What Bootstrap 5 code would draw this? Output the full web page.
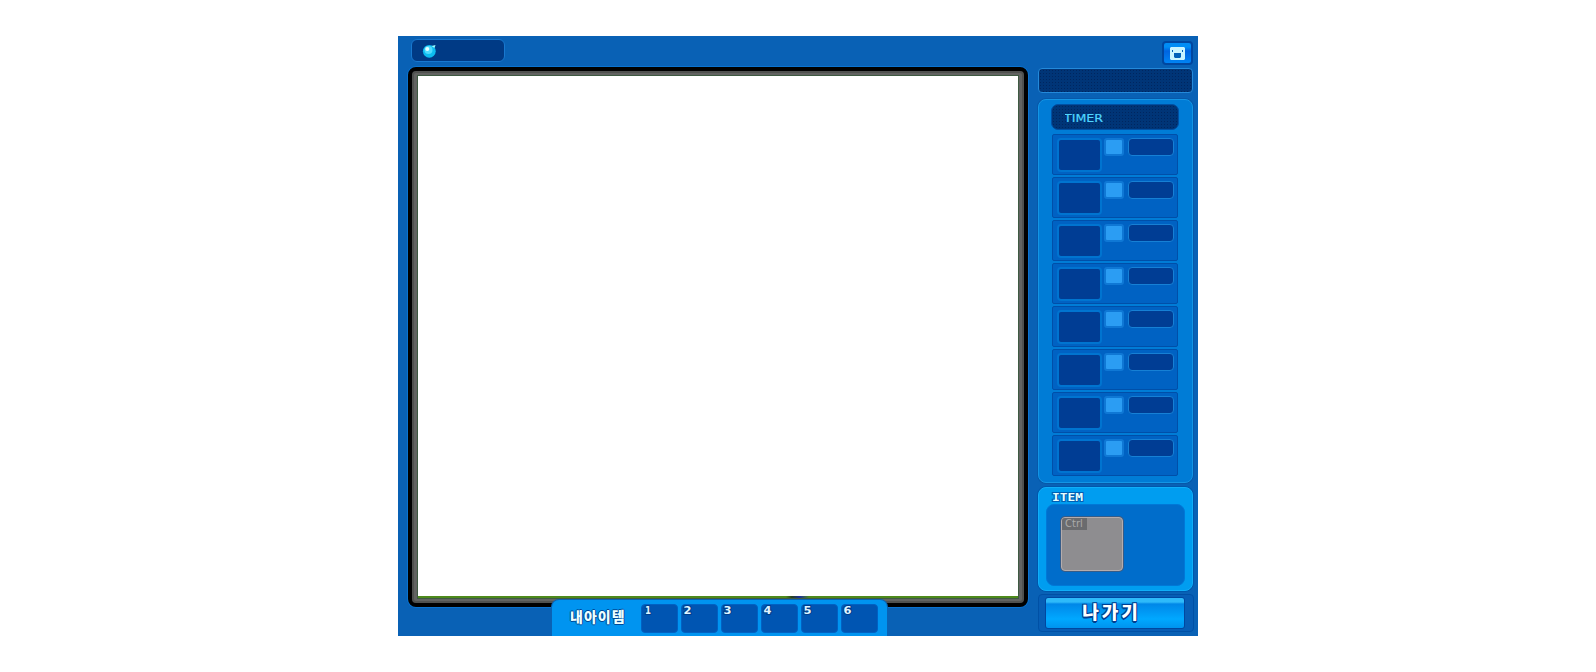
<!DOCTYPE html>
<html lang="ko">
<head>
<meta charset="utf-8">
<title>Game room</title>
<link href="https://cdn.jsdelivr.net/npm/bootstrap@5.3.0/dist/css/bootstrap.min.css" rel="stylesheet">
<style>
body{background:#fff;font-family:"Noto Sans","Noto Sans CJK KR",sans-serif;line-height:1}
.stage{width:800px;height:600px;margin-top:36px;background:#0961b5;padding-left:10px}
.left-side{width:620px;padding-top:3px}
.gem-box{width:94px;height:23px;margin-left:3px;border-radius:6px;background:#003a85;border:1px solid #1878cf;padding-left:10px}
.screen{width:620px;height:540px;margin-top:5px;background:#626361;border:4px solid #000;border-radius:8px;padding:5px 6px 0;box-shadow:0 0 0 1px #0a73d0,inset 0 0 0 2px #50514f}
.view{background:#fff;height:522px;box-shadow:0 0 0 1px #3e5a42;border-bottom:2px solid #4e8a1c}
.speck{left:368px;top:520px;width:23px;height:2px;background:linear-gradient(90deg,#4e8a1c,#28401c 25%,#1b2d9a 60%,#4e8a1c)}
.item-tab{left:154px;bottom:0;width:335px;height:36px;background:#0094f0;border-radius:7px 7px 0 0;padding:4px 0 0 18px;box-shadow:0 0 0 1px #0a62b4}
.tab-title{width:71px;font-weight:900;font-size:14px;color:#eaffff;letter-spacing:1px;text-shadow:1px 0 #004a98,-1px 0 #004a98,0 1px #004a98,0 -1px #004a98;line-height:26px;white-space:nowrap}
.slot{width:37px;height:29px;margin-right:3px;background:#0055b2;border-radius:4px;border:1px solid #0061c3}
.slot svg{display:block}
.right-side{width:156px;margin-left:10px;padding-top:5px}
.cam{width:31px;height:24px;margin-bottom:3px;margin-right:1px;background:linear-gradient(#008df5 0 4px,#0064e0 8px,#0084f4);border:2px solid #0047a0;border-radius:4px}
.dots{background-color:#003577;background-image:radial-gradient(#00265f 34%,transparent 38%);background-size:3px 3px}
.name-bar{height:25px;width:155px;border:1px solid #2389da;border-radius:4px}
.players{height:384px;width:155px;margin-top:6px;background:#007cd6;border:1px solid #1395e5;border-radius:8px;padding:4px 12px 0;box-shadow:0 0 0 1px #0758a9}
.timer{height:26px;width:128px;border-radius:7px;margin-bottom:4px;padding-left:13px;border:1px solid #0050a4}
.timer svg,.item-panel svg{display:block}
.seat{width:126px;height:41px;margin:0 0 2px 1px;background:#0062c3;border:1px solid #004fa9;border-radius:2px;padding:3px 3px 0 5px}
.face{width:45px;height:34px;margin-left:-1px;background:#003d94;border:2px solid #0074d0;border-radius:4px}
.rank{width:20px;height:18px;margin-left:2px;background:#2b9df3;border:2px solid #0f78d5;border-radius:3px}
.nick{width:46px;height:18px;margin-left:4px;background:#003d94;border:1px solid #1680d5;border-radius:4px}
.item-panel{width:155px;height:104px;margin-top:4px;background:#009df0;border-radius:8px;padding:3px 8px;border:1px solid #10aef8;box-shadow:0 0 0 1px #0057ac}
.item-well{width:139px;height:82px;margin-left:-1px;margin-top:0;background:#006dcb;border-radius:8px;padding:12px 13px 13px 14px;border:1px solid #0078d7}
.card-slot{width:62px;height:54px;background:#8e8d90;border:1px solid #b5acac;border-radius:4px;box-shadow:0 0 0 1px #365c88}
.key-tag{width:25px;height:12px;background:#6a6b6e;color:#aaa;font:10px/12px "DejaVu Sans",sans-serif;padding-left:3px;border-radius:3px 0 0}
.exit-wrap{width:156px;height:38px;margin-top:3px;border:1px solid #0050a5;border-radius:4px;padding:2px 6px;background:#075db5}
.exit-btn{width:140px;height:32px;background:linear-gradient(#2ebafa 0 4px,#0087e8 6px,#00a8ff 70%,#0093ee);border:1px solid #0047a0;border-radius:3px;color:#fff;font-weight:900;font-size:18px;line-height:29px;letter-spacing:3px;padding-right:7px;text-shadow:1px 1px #003f91,-1px 1px #003f91,1px -1px #003f91,-1px -1px #003f91,0 2px #003f91}
</style>
</head>
<body>
<main class="stage mx-auto d-flex position-relative overflow-hidden">
 <section class="left-side">
  <div class="gem-box d-flex align-items-center">
   <svg width="15" height="14" viewBox="0 0 14 14"><circle cx="6.8" cy="7.3" r="6.4" fill="#0cbdf0"/><circle cx="6" cy="6" r="4" fill="#4fdcff"/><circle cx="4.8" cy="5" r="2" fill="#e8ffff"/><path d="M9 2l4-1-1 3z" fill="#9ff"/></svg>
  </div>
  <div class="screen"><div class="view position-relative"><div class="speck position-absolute"></div></div></div>
 </section>
 <aside class="right-side d-flex flex-column">
  <div class="cam align-self-end d-flex justify-content-center align-items-center">
   <svg width="15" height="13" viewBox="0 0 15 13"><path d="M1 0h13l1 1v11l-1 1H1l-1-1V1z" fill="#c8f4ff"/><path d="M2 3h1v2H2zM12 3h1v2h-1zM4 6h7v4l-1 1H5l-1-1z" fill="#0060b8"/></svg>
  </div>
  <div class="name-bar dots"></div>
  <div class="players">
   <div class="timer dots"><svg width="60" height="24"><text x="-1" y="17" textLength="39" lengthAdjust="spacingAndGlyphs" font-family="DejaVu Sans" font-size="10.5" fill="#4fd6ff" stroke="#4fd6ff" stroke-width=".2">TIMER</text></svg></div>
   <div id="seats"></div>
  </div>
  <div class="item-panel">
   <svg width="60" height="13"><text x="5" y="10" textLength="31" lengthAdjust="spacingAndGlyphs" font-family="DejaVu Sans Mono" font-weight="700" font-size="11" fill="#e6ffff" stroke="#0060b4" stroke-width="2" paint-order="stroke">ITEM</text></svg>
   <div class="item-well"><div class="card-slot"><div class="key-tag">Ctrl</div></div></div>
  </div>
  <div class="exit-wrap"><div class="exit-btn text-center">나가기</div></div>
 </aside>
 <nav class="item-tab position-absolute d-flex">
  <div class="tab-title">내아이템</div>
  <div id="slots" class="d-flex"></div>
 </nav>
</main>
<script src="https://cdn.jsdelivr.net/npm/bootstrap@5.3.0/dist/js/bootstrap.bundle.min.js"></script>
<script>
document.getElementById('seats').innerHTML='<div class="seat d-flex"><div class="face"></div><div class="rank"></div><div class="nick"></div></div>'.repeat(8);
document.getElementById('slots').innerHTML=[1,2,3,4,5,6].map(n=>`<div class="slot"><svg width="20" height="14"><text x="${n===1?3:1.5}" y="8.5" textLength="${n===1?6:8}" lengthAdjust="spacingAndGlyphs" font-family="DejaVu Sans" font-weight="700" font-size="10" fill="#dff4ff" stroke="#003f8c" stroke-width="2" paint-order="stroke">${n}</text></svg></div>`).join('');
</script>
</body>
</html>
